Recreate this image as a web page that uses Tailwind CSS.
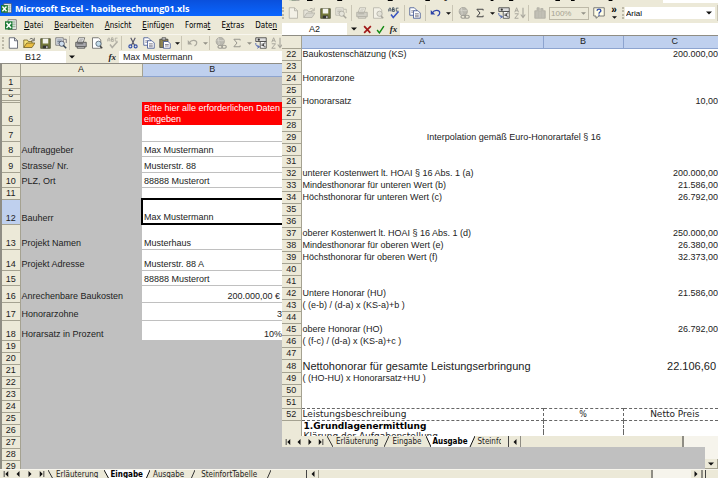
<!DOCTYPE html>
<html lang="de">
<head>
  <meta charset="utf-8">
  <title>Microsoft Excel - haoiberechnung01.xls</title>
  <meta name="viewport" content="width=device-width, initial-scale=1">
  <script src="https://cdn.jsdelivr.net/npm/@tailwindcss/browser@4"></script>
</head>
<body class="bg-[#c0c0c0] text-[#222] font-['Liberation_Sans',Arial,sans-serif] text-[9px] leading-[11px]">

<!-- icon set -->
<svg class="hidden">
  <symbol id="i-excel" viewBox="0 0 16 16"><path d="M4 1h11v13H4z" fill="#fff" stroke="#555"/><path d="M9 4h5M9 7h5M9 10h5M12 2v11" stroke="#8a8"/><path d="M0 3h10v11H0z" fill="#1d7a35"/><path d="M2 5l6 7M8 5l-6 7" stroke="#fff" stroke-width="2"/></symbol>
  <symbol id="i-new" viewBox="0 0 16 16"><path d="M3 1h7l4 4v10H3z" fill="#fff" stroke="#444a5a"/><path d="M10 1v4h4" fill="none" stroke="#444a5a"/></symbol>
  <symbol id="i-open" viewBox="0 0 16 16"><path d="M1 14V4h5l1 2h5v3" fill="#f6e27a" stroke="#6a5a20"/><path d="M1 14l4-6h11l-4 6z" fill="#e9bd42" stroke="#6a5a20"/><path d="M9 3c2-2 4-1 5 1m1-3v4h-4" fill="none" stroke="#444"/></symbol>
  <symbol id="i-save" viewBox="0 0 16 16"><path d="M1 1h14v14H1z" fill="#767a3c" stroke="#3c3f2a"/><path d="M4 1h8v7H4z" fill="#f3f3ee"/><path d="M4 11h8v4H4z" fill="#333"/><path d="M9 12h2v3H9z" fill="#ddd"/></symbol>
  <symbol id="i-find" viewBox="0 0 16 16"><path d="M1 1h10v10H1z" fill="#dfe3ea" stroke="#666"/><path d="M3 4h6M3 6h6M3 8h4" stroke="#567"/><circle cx="9" cy="9" r="3.500" fill="#cfe0ef" stroke="#445"/><path d="M11 11l4 4" stroke="#345" stroke-width="2"/><path d="M12 3h3v5" fill="none" stroke="#556"/></symbol>
  <symbol id="i-print" viewBox="0 0 16 16"><path d="M5 1h8l-2 6H3z" fill="#fff" stroke="#555"/><path d="M1 7h14v6H1z" fill="#a9a9ae" stroke="#444"/><path d="M3 13h10v2H3zM3 9h8" fill="#ddd" stroke="#444"/><path d="M6 3h5M5 5h5" stroke="#888"/></symbol>
  <symbol id="i-preview" viewBox="0 0 16 16"><path d="M2 1h8l3 3v11H2z" fill="#fff" stroke="#555"/><circle cx="10" cy="9" r="3.500" fill="#c4dcea" stroke="#456"/><path d="M12 12l3 3" stroke="#444" stroke-width="2"/></symbol>
  <symbol id="i-spell" viewBox="0 0 16 16"><path d="M1 6V3l1.500-2L4 3v3M1 4h3M6 1v5h2.500v-2.500H6h2V1zM14 1.500h-3v4h3" fill="none" stroke="#345"/><path d="M4 10l3 4 7-8" fill="none" stroke="#3a55c0" stroke-width="2"/></symbol>
  <symbol id="i-cut" viewBox="0 0 16 16"><path d="M5 1l5 10M11 1L6 11" stroke="#556" stroke-width="1.500"/><circle cx="4.500" cy="12.500" r="2" fill="none" stroke="#2c4aa8" stroke-width="1.500"/><circle cx="11.500" cy="12.500" r="2" fill="none" stroke="#2c4aa8" stroke-width="1.500"/></symbol>
  <symbol id="i-copy" viewBox="0 0 16 16"><path d="M1 1h6l3 3v7H1z" fill="#fff" stroke="#334a8c"/><path d="M3 5h5M3 7h5" stroke="#778"/><path d="M6 5h6l3 3v7H6z" fill="#fff" stroke="#334a8c"/><path d="M8 9h5M8 11h5M8 13h5" stroke="#667"/></symbol>
  <symbol id="i-paste" viewBox="0 0 16 16"><path d="M1 3h11v11H1z" fill="#8d8350" stroke="#444"/><path d="M4 1h5v3H4z" fill="#ccc" stroke="#444"/><path d="M6 6h6l3 3v6H6z" fill="#fff" stroke="#334a8c"/><path d="M8 10h5M8 12h5" stroke="#667"/></symbol>
  <symbol id="i-undo" viewBox="0 0 16 16"><path d="M3 8c3-5 10-4 10 0 0 2-1 3-3 4" fill="none" stroke="#2d43a8" stroke-width="1.600"/><path d="M1 4v6h6z" fill="#2d43a8"/></symbol>
  <symbol id="i-web" viewBox="0 0 16 16"><circle cx="7" cy="6" r="5.500" fill="#8a8a8a" stroke="#555"/><path d="M2 5c3-3 6 2 10-1M5 1c-2 4 2 6 0 10" fill="none" stroke="#ccc"/><ellipse cx="7" cy="13" rx="3" ry="2" fill="none" stroke="#555" stroke-width="1.500"/><ellipse cx="12" cy="13" rx="3" ry="2" fill="none" stroke="#555" stroke-width="1.500"/></symbol>
  <symbol id="i-sum" viewBox="0 0 16 16"><path d="M13 4V2H3l5 6-5 6h10v-2" fill="none" stroke="#444" stroke-width="1.600"/></symbol>
  <symbol id="i-euro" viewBox="0 0 16 16"><path d="M1 1h14v5H1z" fill="#ddd" stroke="#333"/><circle cx="5" cy="3.500" r="1.500" fill="#333"/><path d="M7 6h8v9H7z" fill="#fff" stroke="#333"/><path d="M14 8c-4-1-4 6 0 5M8.500 9.500h4M8.500 11.500h4" fill="none" stroke="#222"/><path d="M1 8c0 3 1 5 4 5M3 11l3 2-3 2" fill="none" stroke="#2c4aa8"/></symbol>
  <symbol id="i-sort" viewBox="0 0 16 16"><path d="M1 7l2.500-6L6 7M2 5h3M1 9h5l-5 6h5" fill="none" stroke="#444" stroke-width="1.300"/><path d="M12 1v12M9 10l3 4 3-4" fill="none" stroke="#444" stroke-width="1.500"/></symbol>
  <symbol id="i-chart" viewBox="0 0 16 16"><path d="M1 5v10h14V5h-3V2H9v4H7V1H4v4z" fill="#777" stroke="#555"/><path d="M4 6v8M8 6v8M12 6v8" stroke="#999"/></symbol>
  <symbol id="i-help" viewBox="0 0 16 16"><path d="M1 1h14v11h-7l-4 3v-3H1z" fill="#fffde6" stroke="#555"/><path d="M5.500 5c0-3 5-3 5 0 0 2-2.500 1.500-2.500 4M8 10v1.500" fill="none" stroke="#2c4aa8" stroke-width="1.800"/></symbol>
  <symbol id="i-down" viewBox="0 0 8 8"><path d="M0 2h8L4 6z" fill="#111"/></symbol>
  <symbol id="i-left" viewBox="0 0 8 8"><path d="M6 0v8L2 4z" fill="#111"/></symbol>
  <symbol id="i-right" viewBox="0 0 8 8"><path d="M2 0v8l4-4z" fill="#111"/></symbol>
  <symbol id="i-first" viewBox="0 0 8 8"><path d="M7 0v8L3 4zM1 0h1v8H1z" fill="#111"/></symbol>
  <symbol id="i-last" viewBox="0 0 8 8"><path d="M1 0v8l4-4zM6 0h1v8H6z" fill="#111"/></symbol>
  <symbol id="i-cancel" viewBox="0 0 16 16"><path d="M2 2l11 12M14 2L2 14" stroke="#a01818" stroke-width="3"/></symbol>
  <symbol id="i-ok" viewBox="0 0 16 16"><path d="M2 9l4 5 8-12" fill="none" stroke="#138a13" stroke-width="2.600"/></symbol>
</svg>

<div class="relative h-screen overflow-hidden">

  <!-- back window: Eingabe -->
  <main class="flex h-full flex-col bg-[#ece9d8]">
    <header class="flex h-4 shrink-0 items-center gap-[3px] bg-linear-to-b from-[#0a50dc] to-[#0a66ff] pl-px">
      <svg class="size-[11px]"><use href="#i-excel"/></svg>
      <h1 class="whitespace-nowrap font-['Open_Sans','Noto_Sans',sans-serif] text-[9px] font-bold text-white">Microsoft Excel - haoiberechnung01.xls</h1>
    </header>

    <nav class="flex h-[18px] shrink-0 items-center gap-[11px] pl-[5px] font-['DejaVu_Sans_Condensed','DejaVu_Sans',sans-serif] text-[8px] text-black">
      <svg class="-mr-1 size-[12px]"><use href="#i-excel"/></svg>
      <button><u>D</u>atei</button>
      <button><u>B</u>earbeiten</button>
      <button><u>A</u>nsicht</button>
      <button><u>E</u>infügen</button>
      <button>Forma<u>t</u></button>
      <button>E<u>x</u>tras</button>
      <button>Date<u>n</u></button>
      <button><u>F</u>enster</button>
    </nav>

    <div class="flex h-[17px] shrink-0 items-center border-t border-[#f8f6ee] pl-[2px]">
      <span class="h-3 w-[3px] border-l-2 border-dotted border-[#bdb9a8]"></span>
      <button aria-label="Neu" class="grid w-4 place-items-center"><svg class="size-3"><use href="#i-new"/></svg></button>
      <button aria-label="Öffnen" class="grid w-4 place-items-center"><svg class="size-3"><use href="#i-open"/></svg></button>
      <button aria-label="Speichern" class="grid w-4 place-items-center"><svg class="size-[11px]"><use href="#i-save"/></svg></button>
      <button aria-label="Suchen" class="grid w-4 place-items-center"><svg class="size-3"><use href="#i-find"/></svg></button>
      <span class="mr-[3px] h-[14px] w-px bg-[#c9c5b4]"></span>
      <button aria-label="Drucken" class="grid w-4 place-items-center"><svg class="size-3"><use href="#i-print"/></svg></button>
      <button aria-label="Seitenansicht" class="grid w-4 place-items-center"><svg class="size-3"><use href="#i-preview"/></svg></button>
      <button aria-label="Rechtschreibung" disabled class="grid w-4 place-items-center opacity-40 grayscale"><svg class="size-3"><use href="#i-spell"/></svg></button>
      <span class="mr-[3px] h-[14px] w-px bg-[#c9c5b4]"></span>
      <button aria-label="Ausschneiden" class="grid w-4 place-items-center"><svg class="size-3"><use href="#i-cut"/></svg></button>
      <button aria-label="Kopieren" class="grid w-4 place-items-center"><svg class="size-3"><use href="#i-copy"/></svg></button>
      <button aria-label="Einfügen" class="grid w-4 place-items-center"><svg class="size-3"><use href="#i-paste"/></svg></button>
      <button aria-label="Einfügeoptionen" class="grid w-2 place-items-center"><svg class="size-[5px]"><use href="#i-down"/></svg></button>
      <span class="mr-[3px] h-[14px] w-px bg-[#c9c5b4]"></span>
      <button aria-label="Rückgängig" disabled class="grid w-4 place-items-center opacity-40 grayscale"><svg class="size-3"><use href="#i-undo"/></svg></button>
      <button aria-label="Rückgängig-Liste" disabled class="grid w-2 place-items-center opacity-40"><svg class="size-[5px]"><use href="#i-down"/></svg></button>
      <span class="mr-[3px] h-[14px] w-px bg-[#c9c5b4]"></span>
      <button aria-label="Hyperlink" disabled class="grid w-4 place-items-center opacity-50 grayscale"><svg class="size-3"><use href="#i-web"/></svg></button>
      <button aria-label="AutoSumme" disabled class="grid w-4 place-items-center opacity-50"><svg class="size-[10px]"><use href="#i-sum"/></svg></button>
      <button aria-label="AutoSumme-Liste" disabled class="grid w-2 place-items-center opacity-40"><svg class="size-[5px]"><use href="#i-down"/></svg></button>
      <button aria-label="Euro" class="grid w-4 place-items-center"><svg class="size-3"><use href="#i-euro"/></svg></button>
      <button aria-label="Sortieren" disabled class="grid w-4 place-items-center opacity-40"><svg class="size-3"><use href="#i-sort"/></svg></button>
    </div>

    <div class="flex h-3 shrink-0 items-stretch">
      <input aria-label="Namenfeld" value="B12" class="w-[66px] bg-white text-center text-[9px]">
      <button aria-label="Namen" class="grid w-3 place-items-center"><svg class="size-[6px]"><use href="#i-down"/></svg></button>
      <button class="w-[41px] pr-[3px] text-right font-['Liberation_Serif',serif] text-[9px] font-bold italic">fx</button>
      <input aria-label="Formel" value="Max Mustermann" class="min-w-0 flex-1 bg-white pl-1 text-[9px] text-[#222]">
    </div>

    <section class="flex-1 overflow-hidden border-t border-l-2 border-[#8f8d84] bg-[#c0c0c0]">
      <table class="w-[280px] table-fixed border-collapse">
        <colgroup><col class="w-[18px]"><col class="w-[122px]"><col></colgroup>
        <thead>
          <tr class="h-3 bg-[#ece9d8]">
            <th class="p-0 border-r border-b border-[#a5a291]"></th>
            <th class="p-0 border-r border-b border-[#a5a291] font-normal">A</th>
            <th class="p-0 border-b border-[#8da4cf] bg-[#bfd0ee] font-normal">B</th>
          </tr>
        </thead>
        <tbody id="eingabe"></tbody>
      </table>
    </section>

    <footer class="flex h-[9px] shrink-0 items-start overflow-hidden border-t border-[#f8f6ee] font-['DejaVu_Sans_Condensed','DejaVu_Sans',sans-serif] text-[8px] leading-[9px]">
      <button aria-label="Erstes Blatt" class="grid w-3 place-items-center pt-px"><svg class="size-[6px]"><use href="#i-first"/></svg></button>
      <button aria-label="Vorheriges Blatt" class="grid w-3 place-items-center pt-px"><svg class="size-[6px]"><use href="#i-left"/></svg></button>
      <button aria-label="Nächstes Blatt" class="grid w-3 place-items-center pt-px"><svg class="size-[6px]"><use href="#i-right"/></svg></button>
      <button aria-label="Letztes Blatt" class="grid w-3 place-items-center pt-px"><svg class="size-[6px]"><use href="#i-last"/></svg></button>
      <svg class="h-[9px] w-[5px] shrink-0"><path d="M0 0l5 9" stroke="#333"/></svg>
      <button class="pr-[6px] pl-[3px]">Erläuterung</button>
      <div class="flex bg-white">
        <svg class="h-[9px] w-[5px]"><path d="M0 0v9h5z" fill="#ece9d8"/><path d="M0 0l5 9" stroke="#111"/></svg>
        <button class="px-px font-bold text-black">Eingabe</button>
        <svg class="h-[9px] w-[6px]"><path d="M6 0v9H2z" fill="#ece9d8"/><path d="M6 0L2 9" stroke="#111"/></svg>
      </div>
      <button class="pr-[6px] pl-[3px]">Ausgabe</button>
      <svg class="h-[9px] w-[5px] shrink-0"><path d="M5 0L1 9" stroke="#333"/></svg>
      <button class="pr-[9px] pl-[6px]">SteinfortTabelle</button>
      <svg class="h-[9px] w-[5px] shrink-0"><path d="M5 0L1 9" stroke="#333"/></svg>
      <div class="ml-auto flex h-full w-[412px] items-stretch border-l border-[#444]">
        <button aria-label="Nach links" class="grid w-3 place-items-center border-r border-[#a5a291]"><svg class="size-[6px]"><use href="#i-left"/></svg></button>
        <div class="w-[334px] border-r-2 border-[#8f8d84]"></div>
        <div class="flex-1 bg-[#f6f4ec]"></div>
        <button aria-label="Nach rechts" class="grid w-3 place-items-center border-r-2 border-[#8f8d84]"><svg class="size-[6px]"><use href="#i-right"/></svg></button>
        <div class="ml-[2px] w-[13px] border-l border-[#444]"></div>
      </div>
    </footer>
  </main>

  <!-- vertical scrollbar of the back window -->
  <div class="absolute right-0 bottom-[9px] flex h-6 w-[13px] flex-col justify-end bg-[#f6f4ec]">
    <button aria-label="Nach unten" class="grid h-[10px] place-items-center border-r border-b border-[#a5a291] bg-[#ece9d8]"><svg class="size-[6px]"><use href="#i-down"/></svg></button>
  </div>

  <!-- front window: Ausgabe -->
  <section class="absolute top-0 right-0 left-[282px] bg-white">
    <nav class="flex h-[3px] items-end overflow-hidden bg-white font-['DejaVu_Sans_Condensed','DejaVu_Sans',sans-serif] text-[8px] text-black">
      <div class="flex h-full items-end gap-[11px] bg-[#ece9d8] pr-[51px] pl-[7px] leading-[13px]">
        <svg class="-mr-1 h-[14px] w-[11px]"><use href="#i-excel"/></svg>
        <button><u>D</u>atei</button>
        <button><u>B</u>earbeiten</button>
        <button><u>A</u>nsicht</button>
        <button><u>E</u>infügen</button>
        <button>Forma<u>t</u></button>
        <button>E<u>x</u>tras</button>
        <button>Date<u>n</u></button>
        <button><u>F</u>enster</button>
        <button><u>?</u></button>
      </div>
    </nav>

    <div class="flex h-5 items-center bg-[#ece9d8] text-[8px]">
      <span class="h-3 w-[3px] border-l-2 border-dotted border-[#bdb9a8]"></span>
      <button aria-label="Neu" disabled class="grid w-4 place-items-center opacity-40 grayscale"><svg class="size-3"><use href="#i-new"/></svg></button>
      <button aria-label="Öffnen" disabled class="grid w-4 place-items-center opacity-40 grayscale"><svg class="size-3"><use href="#i-open"/></svg></button>
      <button aria-label="Speichern" class="grid w-4 place-items-center"><svg class="size-[11px]"><use href="#i-save"/></svg></button>
      <button aria-label="Suchen" disabled class="grid w-4 place-items-center opacity-40 grayscale"><svg class="size-3"><use href="#i-find"/></svg></button>
      <span class="mx-[2px] h-4 w-px bg-[#c9c5b4]"></span>
      <button aria-label="Drucken" disabled class="grid w-4 place-items-center opacity-40 grayscale"><svg class="size-3"><use href="#i-print"/></svg></button>
      <button aria-label="Seitenansicht" disabled class="grid w-4 place-items-center opacity-40 grayscale"><svg class="size-3"><use href="#i-preview"/></svg></button>
      <button aria-label="Rechtschreibung" class="grid w-4 place-items-center"><svg class="size-3"><use href="#i-spell"/></svg></button>
      <span class="mx-[2px] h-4 w-px bg-[#c9c5b4]"></span>
      <button aria-label="Kopieren" class="grid w-4 place-items-center"><svg class="size-3"><use href="#i-copy"/></svg></button>
      <span class="mx-[2px] h-4 w-px bg-[#c9c5b4]"></span>
      <button aria-label="Rückgängig" class="grid w-4 place-items-center"><svg class="size-3"><use href="#i-undo"/></svg></button>
      <button aria-label="Rückgängig-Liste" class="grid w-2 place-items-center"><svg class="size-[5px]"><use href="#i-down"/></svg></button>
      <span class="mr-[3px] h-4 w-px bg-[#c9c5b4]"></span>
      <button aria-label="Hyperlink" disabled class="grid w-4 place-items-center opacity-50 grayscale"><svg class="size-3"><use href="#i-web"/></svg></button>
      <button aria-label="AutoSumme" class="grid w-4 place-items-center"><svg class="size-[10px]"><use href="#i-sum"/></svg></button>
      <button aria-label="AutoSumme-Liste" class="grid w-2 place-items-center"><svg class="size-[5px]"><use href="#i-down"/></svg></button>
      <button aria-label="Euro" class="grid w-4 place-items-center"><svg class="size-3"><use href="#i-euro"/></svg></button>
      <button aria-label="Sortieren" disabled class="grid w-4 place-items-center opacity-40"><svg class="size-3"><use href="#i-sort"/></svg></button>
      <span class="mr-[3px] h-4 w-px bg-[#c9c5b4]"></span>
      <button aria-label="Diagramm" disabled class="grid w-4 place-items-center opacity-40"><svg class="size-3"><use href="#i-chart"/></svg></button>
      <div class="ml-px flex h-[13px] w-10 items-center border border-[#bdb9a8] pr-[2px] text-[#a5a291]">
        <select aria-label="Zoom" disabled class="min-w-0 flex-1 appearance-none pl-px"><option>100%</option></select>
        <svg class="size-[5px] opacity-40"><use href="#i-down"/></svg>
      </div>
      <button aria-label="Hilfe" class="ml-[2px] grid w-4 place-items-center"><svg class="size-3"><use href="#i-help"/></svg></button>
      <button aria-label="Optionen" class="ml-[3px] flex w-2 flex-col items-center text-[10px] leading-[7px] font-bold text-black"><span>»</span><svg class="mt-[2px] size-[5px]"><use href="#i-down"/></svg></button>
      <span class="ml-1 h-3 w-[3px] border-l-2 border-dotted border-[#bdb9a8]"></span>
      <div class="mr-[2px] flex h-3 min-w-0 flex-1 items-center bg-white pr-[3px] text-black">
        <select aria-label="Schriftart" class="min-w-0 flex-1 appearance-none pl-px"><option>Arial</option></select>
        <svg class="size-[6px]"><use href="#i-down"/></svg>
      </div>
      <span class="h-4 w-px bg-[#c9c5b4]"></span>
    </div>

    <div class="flex h-3 items-stretch bg-[#ece9d8]">
      <input aria-label="Namenfeld" value="A2" class="w-[65px] bg-white text-center text-[9px]">
      <button aria-label="Namen" class="grid w-[14px] place-items-center"><svg class="size-[6px]"><use href="#i-down"/></svg></button>
      <button aria-label="Abbrechen" class="grid w-[13px] place-items-center"><svg class="size-[9px]"><use href="#i-cancel"/></svg></button>
      <button aria-label="Eingeben" class="grid w-[13px] place-items-center"><svg class="size-[9px]"><use href="#i-ok"/></svg></button>
      <button class="w-[13px] text-center font-['Liberation_Serif',serif] text-[9px] font-bold italic">fx</button>
      <input aria-label="Formel" class="min-w-0 flex-1 bg-white text-[9px]">
    </div>

    <div class="h-[401px] overflow-hidden border-t border-[#8f8d84]">
      <table class="w-full table-fixed border-collapse">
        <colgroup><col class="w-[19px]"><col class="w-[242px]"><col class="w-20"><col></colgroup>
        <thead>
          <tr class="h-3 bg-[#bfd0ee]">
            <th class="p-0 border-r border-b border-[#a5a291] bg-[#ece9d8]"></th>
            <th class="p-0 border-r border-b border-[#8da4cf] font-normal">A</th>
            <th class="p-0 border-r border-b border-[#8da4cf] font-normal">B</th>
            <th class="p-0 border-b border-[#8da4cf] pl-2 font-normal">C</th>
          </tr>
        </thead>
        <tbody id="ausgabe"></tbody>
      </table>
    </div>

    <footer class="flex h-[11px] items-stretch overflow-hidden bg-[#ece9d8] font-['DejaVu_Sans_Condensed','DejaVu_Sans',sans-serif] text-[8px] leading-[11px]">
      <button aria-label="Erstes Blatt" class="grid w-[11px] place-items-center"><svg class="size-[6px]"><use href="#i-first"/></svg></button>
      <button aria-label="Vorheriges Blatt" class="grid w-[11px] place-items-center"><svg class="size-[6px]"><use href="#i-left"/></svg></button>
      <button aria-label="Nächstes Blatt" class="grid w-[11px] place-items-center"><svg class="size-[6px]"><use href="#i-right"/></svg></button>
      <button aria-label="Letztes Blatt" class="grid w-3 place-items-center"><svg class="size-[6px]"><use href="#i-last"/></svg></button>
      <svg class="h-[11px] w-[6px] shrink-0"><path d="M0 0l6 11" stroke="#333"/></svg>
      <button class="pr-[6px] pl-[3px]">Erläuterung</button>
      <svg class="h-[11px] w-[5px] shrink-0"><path d="M5 0L0 11" stroke="#333"/></svg>
      <button class="pr-[5px] pl-[3px]">Eingabe</button>
      <div class="flex bg-white">
        <svg class="h-[11px] w-[5px]"><path d="M0 0v11h5z" fill="#ece9d8"/><path d="M0 0l5 11" stroke="#111"/></svg>
        <button class="px-px font-bold text-black">Ausgabe</button>
        <svg class="h-[11px] w-[6px]"><path d="M6 0v11H1z" fill="#ece9d8"/><path d="M6 0L1 11" stroke="#111"/></svg>
      </div>
      <button class="w-[26px] overflow-hidden pl-[3px] text-left whitespace-nowrap">Steinfort</button>
      <div class="ml-auto flex w-[210px] shrink-0 items-stretch border-l border-[#444]">
        <button aria-label="Nach links" class="grid w-3 place-items-center border-r border-[#8f8d84]"><svg class="size-[6px]"><use href="#i-left"/></svg></button>
        <div class="w-[163px] border-r-2 border-[#8f8d84]"></div>
        <div class="flex-1 bg-[#f6f4ec]"></div>
      </div>
    </footer>
  </section>
</div>

<script>
// [row number, height, column A, column B, kind of B]
const eingabe = [
  [1, 12], [2, 6], [3, 6], ["", 2],
  [6, 23, "", "Bitte hier alle erforderlichen Daten<br>eingeben", "note"],
  [7, 16, "", "", "in"],
  [8, 15, "Auftraggeber", "Max Mustermann", "in"],
  [9, 16, "Strasse/ Nr.", "Musterstr. 88", "in"],
  [10, 15, "PLZ, Ort", "88888 Musterort", "in"],
  [11, 12, "", "", "in"],
  [12, 25, "Bauherr", "Max Mustermann", "active"],
  [13, 25, "Projekt Namen", "Musterhaus", "in"],
  [14, 21, "Projekt Adresse", "Musterstr. 88 A", "in"],
  [15, 15, "", "88888 Musterort", "in"],
  [16, 17, "Anrechenbare Baukosten", "200.000,00 €", "euro"],
  [17, 18, "Honorarzohne", "3", "num"],
  [18, 20, "Horarsatz in Prozent", "10%", "num"],
  [19, 12], [20, 12], [21, 12], [22, 12], [23, 12], [24, 12], [25, 12], [26, 12], [27, 12], [28, 12], [29, 12]
]

const kinds = {
  note: "bg-[#ff0000] text-white pl-[2px]",
  in: "bg-white border-b border-[#c0c0c0] pl-[2px]",
  active: "bg-white border-y-2 border-l-2 border-black pl-px",
  euro: "bg-white border-b border-[#c0c0c0] text-right pr-[2px]",
  num: "bg-white border-b border-[#c0c0c0] text-right"
}

document.getElementById("eingabe").innerHTML = eingabe.map(([n, h, a, b, kind]) => `
  <tr style="height:${h}px">
    <th class="p-0 font-normal border-r border-b border-[#a5a291] align-top ${n == 12 ? "bg-[#bfd0ee]" : "bg-[#ece9d8]"}">
      <div class="flex items-end justify-center overflow-hidden" style="height:${h - 1}px">${n}</div>
    </th>
    <td class="p-0 pl-px align-bottom whitespace-nowrap">${a || ""}</td>
    <td class="p-0 align-bottom whitespace-nowrap ${kinds[kind] || ""}">${b || ""}</td>
  </tr>`).join("")

// [row number, height, column A, column C, kind of row]
const ausgabe = [
  [22, 12, "Baukostenschätzung (KS)", "200.000,00"],
  [23, 12],
  [24, 12, "Honorarzone"],
  [25, 12],
  [26, 11, "Honorarsatz", "10,00"],
  [27, 12], [28, 12],
  [29, 12, "Interpolation gemäß Euro-Honorartafel § 16", "", "wide"],
  [30, 12], [31, 12],
  [32, 12, "unterer Kostenwert lt. HOAI § 16 Abs. 1 (a)", "200.000,00"],
  [33, 12, "Mindesthonorar für unteren Wert (b)", "21.586,00"],
  [34, 12, "Höchsthonorar für unteren Wert (c)", "26.792,00"],
  [35, 12], [36, 12],
  [37, 12, "oberer Kostenwert lt. HOAI § 16 Abs. 1 (d)", "250.000,00"],
  [38, 12, "Mindesthonorar für oberen Wert (e)", "26.380,00"],
  [39, 12, "Höchsthonorar für oberen Wert (f)", "32.373,00"],
  [40, 12], [41, 12],
  [42, 12, "Untere Honorar (HU)", "21.586,00"],
  [43, 12, "( (e-b) / (d-a) x (KS-a)+b )"],
  [44, 12],
  [45, 12, "obere Honorar (HO)", "26.792,00"],
  [46, 12, "( (f-c) / (d-a) x (KS-a)+c )"],
  [47, 12],
  [48, 13, "Nettohonorar für gesamte Leistungserbringung", "22.106,60", "total"],
  [49, 12, "( (HO-HU) x Honorarsatz+HU )"],
  [50, 12], [51, 12],
  [52, 12, "Leistungsbeschreibung", "Netto Preis", "head"],
  ["", 12, "1.Grundlagenermittlung", "", "group"],
  ["", 12, "Klärung der Aufgabenstellung", "", "item"]
]

function ausgabeCells(a, c, kind) {
  if (kind == "wide") return `<td colspan="3" class="p-0 align-bottom text-center pl-2">${a}</td>`
  if (kind == "total") return `<td class="p-0 pl-px align-bottom whitespace-nowrap text-[11px] leading-[12px]">${a}</td><td></td>
    <td class="p-0 pr-[2px] align-bottom text-right text-[11px] leading-[12px]">${c}</td>`
  if (kind == "head") return `
    <td class="p-0 pl-px border-y border-r border-dashed border-[#666] font-['DejaVu_Sans',sans-serif]">${a}</td>
    <td class="p-0 border-y border-r border-dashed border-[#666] text-center font-['DejaVu_Sans',sans-serif] text-[8px]">%</td>
    <td class="p-0 pl-2 border-y border-dashed border-[#666] text-center font-['DejaVu_Sans',sans-serif]">${c}</td>`
  if (kind == "group" || kind == "item") return `
    <td class="p-0 pl-[2px] border-r border-dashed border-[#666] font-['DejaVu_Sans',sans-serif] ${kind == "group" ? "font-bold text-black" : "align-top leading-[9px]"}">${a}</td>
    <td class="p-0 border-r border-dashed border-[#666]"></td><td></td>`
  return `<td class="p-0 pl-px align-bottom whitespace-nowrap">${a || ""}</td><td></td><td class="p-0 align-bottom text-right">${c || ""}</td>`
}

document.getElementById("ausgabe").innerHTML = ausgabe.map(([n, h, a, c, kind]) => `
  <tr style="height:${h}px">
    <th class="p-0 font-normal align-bottom bg-[#ece9d8] border-r border-[#a5a291] ${n ? "border-b" : ""}">
      <div class="flex items-end justify-center overflow-hidden" style="height:${h - 1}px">${n}</div>
    </th>
    ${ausgabeCells(a, c, kind)}
  </tr>`).join("")
</script>
</body>
</html>
